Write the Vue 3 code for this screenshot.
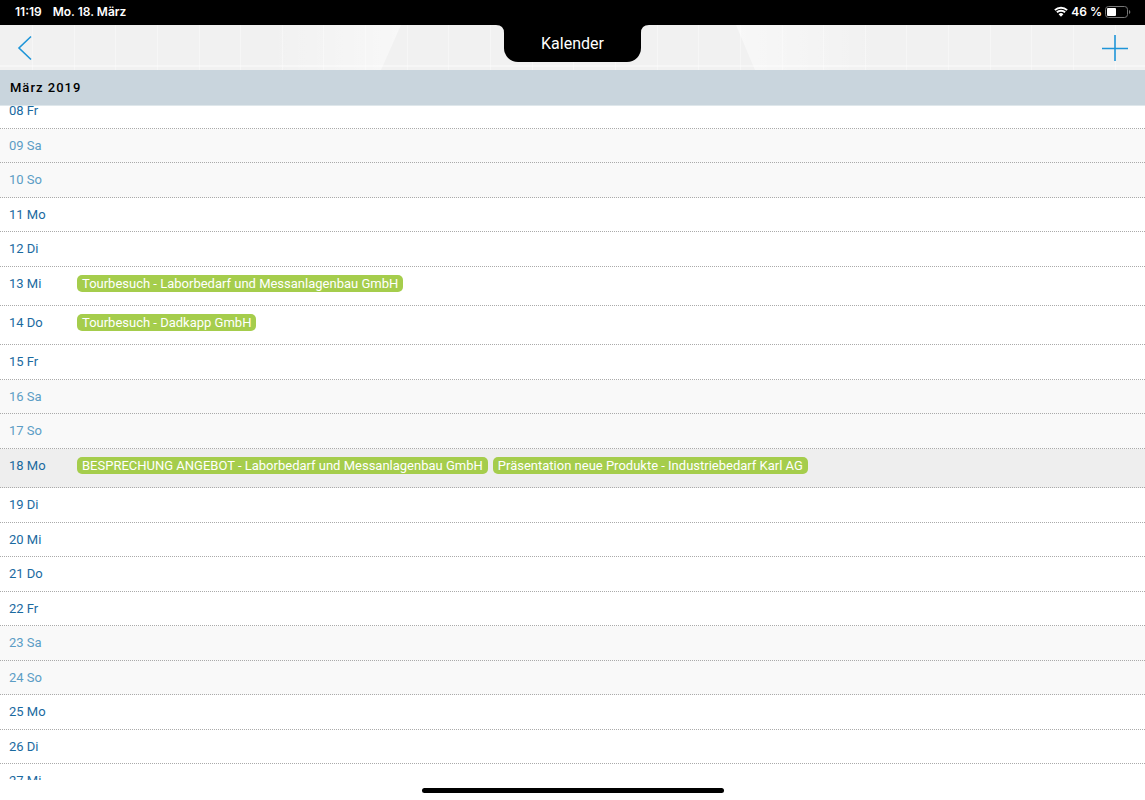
<template>
  <div class="app">
    <div class="status-bar">
      <div class="status-left">
        <span>11:19</span>
        <span>Mo. 18. März</span>
      </div>
      <div class="status-right">
        <svg class="wifi" viewBox="0 0 14 11" aria-hidden="true">
          <path d="M0.9 4.1a8.8 8.8 0 0 1 12.2 0" />
          <path d="M2.9 6.3a5.9 5.9 0 0 1 8.2 0" />
          <path class="dot" d="M7 10.8 4.6 8.3a3.4 3.4 0 0 1 4.8 0z" />
        </svg>
        <span>46 %</span>
        <svg class="battery" viewBox="0 0 26 12" aria-hidden="true">
          <rect class="shell" x="0.5" y="0.5" width="22" height="11" rx="3" />
          <rect class="level" x="2" y="2" width="9" height="8" rx="1" />
          <path class="tip" d="M24 4c1.800.6 1.800 3.400 0 4z" />
        </svg>
      </div>
    </div>

    <header class="header">
      <svg class="header-bg" viewBox="0 0 1145 45" preserveAspectRatio="none" aria-hidden="true">
        <defs>
          <linearGradient id="sheenLeft" x1="0" x2="1">
            <stop offset="0" stop-color="#fff" stop-opacity="0" />
            <stop offset="1" stop-color="#fff" stop-opacity="0.5" />
          </linearGradient>
          <linearGradient id="sheenRight" x1="1" x2="0">
            <stop offset="0" stop-color="#fff" stop-opacity="0" />
            <stop offset="1" stop-color="#fff" stop-opacity="0.5" />
          </linearGradient>
        </defs>
        <path d="M270 0H401L381 45H270z" fill="url(#sheenLeft)" />
        <path d="M736 0H880V45H755z" fill="url(#sheenRight)" />
        <path v-for="x in gridLines" :key="x" class="grid-line" :d="`M${x} 0V45`" />
        <path class="grid-line wide" d="M0 41H1145" />
      </svg>
      <button class="icon-btn back" aria-label="Zurück">
        <svg viewBox="0 0 16 26"><path d="M14 1.500 2 13 14 24.500" /></svg>
      </button>
      <div class="tab">
        <svg class="ear" viewBox="0 0 8 8" aria-hidden="true"><path d="M0 0H8V8Q8 0 0 0z" /></svg>
        <h1>Kalender</h1>
        <svg class="ear" viewBox="0 0 8 8" aria-hidden="true"><path d="M8 0H0V8Q0 0 8 0z" /></svg>
      </div>
      <button class="icon-btn add" aria-label="Neuer Termin">
        <svg viewBox="0 0 26 26"><path d="M13 0V26M0 13.500H26" /></svg>
      </button>
    </header>

    <h2 class="month">März 2019</h2>

    <main class="viewport">
      <ul class="days">
        <li
          v-for="day in days"
          :key="day.label"
          class="day"
          :class="{ weekend: day.weekend, today: day.today, busy: day.events }"
        >
          <span class="date">{{ day.label }}</span>
          <div class="events">
            <button v-for="event in day.events" :key="event" class="event">{{ event }}</button>
          </div>
        </li>
      </ul>
    </main>

    <div class="home-area"><div class="home-indicator"></div></div>
  </div>
</template>

<script setup>
const names = ['Mo', 'Di', 'Mi', 'Do', 'Fr', 'Sa', 'So']
const today = 18

const events = {
  13: ['Tourbesuch - Laborbedarf und Messanlagenbau GmbH'],
  14: ['Tourbesuch - Dadkapp GmbH'],
  18: [
    'BESPRECHUNG ANGEBOT - Laborbedarf und Messanlagenbau GmbH',
    'Präsentation neue Produkte - Industriebedarf Karl AG'
  ]
}

// 8 to 27 March 2019, the 4th was a Monday
const days = Array.from({ length: 20 }, (_, i) => {
  const d = i + 8
  const weekday = (d + 3) % 7
  return {
    label: `${String(d).padStart(2, '0')} ${names[weekday]}`,
    weekend: weekday > 4,
    today: d === today,
    events: events[d]
  }
})

const gridLines = Array.from({ length: 27 }, (_, i) => Math.round(32 + i * 41.64) + 0.5)
</script>

<style>
body { margin: 0; background: #fff; }
</style>

<style scoped>
.app { display: flex; flex-direction: column; height: 100vh; overflow: hidden; font-family: Roboto, sans-serif; background: #fff; }
h1, h2, ul { margin: 0; padding: 0; }
button { border: none; font-family: inherit; cursor: pointer; }

/* Status bar */
.status-bar { display: flex; flex: none; justify-content: space-between; align-items: center; height: 25px; padding: 0 14px 2px 15px; box-sizing: border-box; background: #000; color: #fff; font: 600 12px Inter, sans-serif; }
.status-left { display: flex; gap: 11px; }
.status-right { display: flex; align-items: center; gap: 3px; }
.wifi { width: 14px; height: 11px; fill: none; stroke: #fff; stroke-width: 2; }
.wifi .dot { fill: #fff; stroke: none; }
.battery { width: 26px; height: 12px; }
.shell { fill: none; stroke: #777; }
.level { fill: #fff; }
.tip { fill: #777; }

/* Header */
.header { position: relative; display: flex; flex: none; justify-content: space-between; height: 45px; background: #f1f1f1; }
.header-bg { position: absolute; inset: 0; width: 100%; height: 100%; }
.grid-line { fill: none; stroke: #fff; stroke-opacity: 0.4; }
.wide { stroke-width: 2; }
.icon-btn { position: relative; display: flex; align-items: center; width: 60px; padding: 0 17px; background: none; }
.icon-btn svg { flex: none; height: 26px; fill: none; stroke: #1e95d8; stroke-width: 1.6; }
.back svg { width: 16px; }
.add { justify-content: flex-end; }
.add svg { width: 26px; }
.tab { position: relative; display: flex; height: 37px; }
.tab h1 { width: 137px; border-radius: 0 0 14px 14px; background: #000; color: #fff; font-size: 16px; font-weight: 400; line-height: 37px; text-align: center; }
.ear { width: 8px; height: 8px; }

.month { flex: none; padding: 0 10px; border-bottom: 1px solid #dfe7eb; background: #c9d5dd; color: #000; font-size: 13px; font-weight: 500; letter-spacing: 1px; line-height: 35px; }

/* Day list, scrolled a little past the top of the first row */
.viewport { display: flex; flex: 1; min-height: 0; overflow: hidden; }
.days { display: flex; flex: 1; flex-direction: column; min-width: 0; margin: -12px 0 -19px; list-style: none; }
.day { display: flex; flex: 16 0 0; min-height: 32px; box-sizing: border-box; padding: 8px 0 0 9px; border-bottom: 1px dotted #aaa; color: #1a6a9f; font-size: 13px; line-height: 18px; }
.busy { flex-grow: 19; }
.weekend { background: #f9f9f9; color: #5c9dc5; }
.today { background: #eee; }
.date { flex: none; width: 68px; }
.events { display: flex; flex-wrap: wrap; align-items: flex-start; gap: 5px; }
.event { padding: 0 5px; border-radius: 5px; background: #a5cd4c; color: #fff; font-size: 13px; line-height: 17px; }

.home-area { display: flex; flex: none; justify-content: center; align-items: center; height: 20px; }
.home-indicator { width: 302px; height: 5px; border-radius: 3px; background: #000; }
</style>
